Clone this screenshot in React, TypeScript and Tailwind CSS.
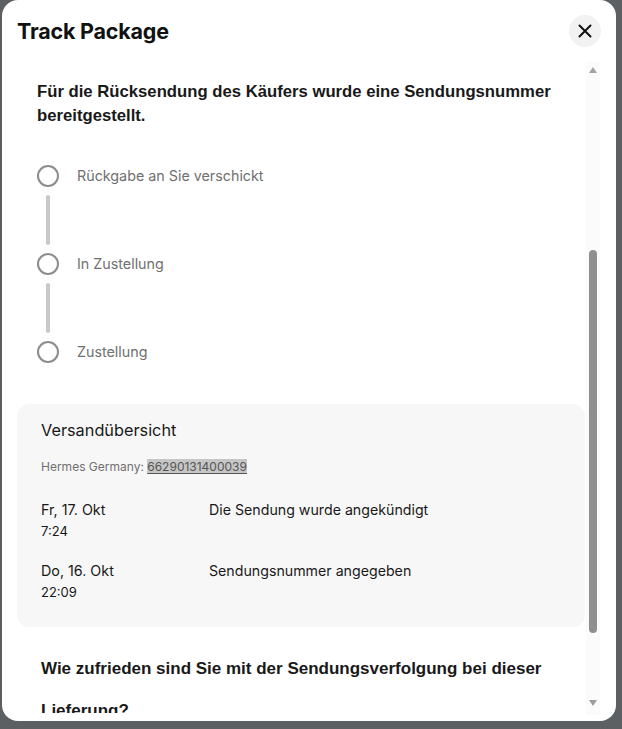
import React from "react";

const sans = { fontFamily: "Inter, 'Liberation Sans', sans-serif" };
const bold = { fontFamily: "'Liberation Sans', Arial, sans-serif" };

function Step({ label, last }: { label: string; last?: boolean }) {
  return (
    <div className="flex flex-col">
      <div className="flex items-center h-[22px]">
        <div className="w-[22px] h-[22px] rounded-full border-2 border-[#8c8c8c] shrink-0" />
        <span className="ml-[18px] text-[14.3px] text-[#707070] leading-[22px]" style={sans}>
          {label}
        </span>
      </div>
      {!last && (
        <div className="w-[22px] flex justify-center h-[66px] py-[8px]">
          <div className="w-[4px] h-full bg-[#c8c8c8] rounded-full" />
        </div>
      )}
    </div>
  );
}

function Row({ date, time, text }: { date: string; time: string; text: string }) {
  return (
    <div className="flex" style={sans}>
      <div className="w-[168px] shrink-0 flex flex-col">
        <span className="text-[14.3px] leading-[20px] text-[#191919]">{date}</span>
        <span className="text-[13px] leading-[20px] text-[#191919] mt-[1px]">{time}</span>
      </div>
      <span className="text-[14.2px] leading-[20px] text-[#191919]">{text}</span>
    </div>
  );
}

export default function App() {
  return (
    <div className="w-[622px] h-[729px] bg-[#5c6062] pl-[2px] pr-[6px] pb-[8px] overflow-hidden">
      <div className="w-[614px] h-[721px] bg-white rounded-[16px] flex flex-col overflow-hidden">
        <div className="h-[62px] shrink-0 flex items-center justify-between pl-[15px] pr-[15px]">
          <h1 className="text-[21.5px] font-bold text-[#111111] tracking-[-0.2px]" style={sans}>
            Track Package
          </h1>
          <button className="w-[32px] h-[32px] rounded-full bg-[#f2f2f2] flex items-center justify-center">
            <svg width="14" height="14" viewBox="0 0 14 14" fill="none">
              <path d="M1.5 1.5 L12.5 12.5 M12.5 1.5 L1.5 12.5" stroke="#111" strokeWidth="2" strokeLinecap="round" />
            </svg>
          </button>
        </div>
        <div className="h-[653px] flex">
          <div className="w-[584px] h-[651px] overflow-hidden pl-[15px] pr-[1px] pt-[18px]">
            <h2 className="pl-[20px] text-[16.7px] font-bold leading-[24px] text-[#191919] pr-[10px]" style={bold}>
              Für die Rücksendung des Käufers wurde eine Sendungsnummer bereitgestellt.
            </h2>
            <div className="pl-[20px] mt-[37px]">
              <Step label="Rückgabe an Sie verschickt" />
              <Step label="In Zustellung" />
              <Step label="Zustellung" last />
            </div>
            <div className="mt-[41px] bg-[#f7f7f7] rounded-[12px] pl-[24px] pt-[14px] pb-[25px] h-[223px]">
              <div className="text-[16.3px] leading-[24px] text-[#191919]" style={sans}>
                Versandübersicht
              </div>
              <div className="mt-[17px] text-[12px] leading-[16px] text-[#707070]" style={sans}>
                Hermes Germany:{" "}
                <span className="bg-[#c6c6c6] text-[#555555] underline underline-offset-2">66290131400039</span>
              </div>
              <div className="mt-[25px] flex flex-col gap-[20px]">
                <Row date="Fr, 17. Okt" time="7:24" text="Die Sendung wurde angekündigt" />
                <Row date="Do, 16. Okt" time="22:09" text="Sendungsnummer angegeben" />
              </div>
            </div>
            <h3 className="mt-[21px] pl-[24px] text-[17px] font-bold leading-[42px] text-[#191919] pr-[20px]" style={bold}>
              Wie zufrieden sind Sie mit der Sendungsverfolgung bei dieser Lieferung?
            </h3>
          </div>
          <div className="w-[14px] flex flex-col items-center bg-[#fbfbfb]">
            <div className="h-[16px] flex items-center justify-center">
              <div className="w-0 h-0 border-l-[4px] border-r-[4px] border-b-[6px] border-l-transparent border-r-transparent border-b-[#a3a3a3]" />
            </div>
            <div className="mt-[172px] w-[8px] h-[383px] rounded-full bg-[#8f8f8f]" />
            <div className="mt-[62px] h-[16px] flex items-center justify-center">
              <div className="w-0 h-0 border-l-[4px] border-r-[4px] border-t-[6px] border-l-transparent border-r-transparent border-t-[#9c9c9c]" />
            </div>
          </div>
        </div>
      </div>
    </div>
  );
}
